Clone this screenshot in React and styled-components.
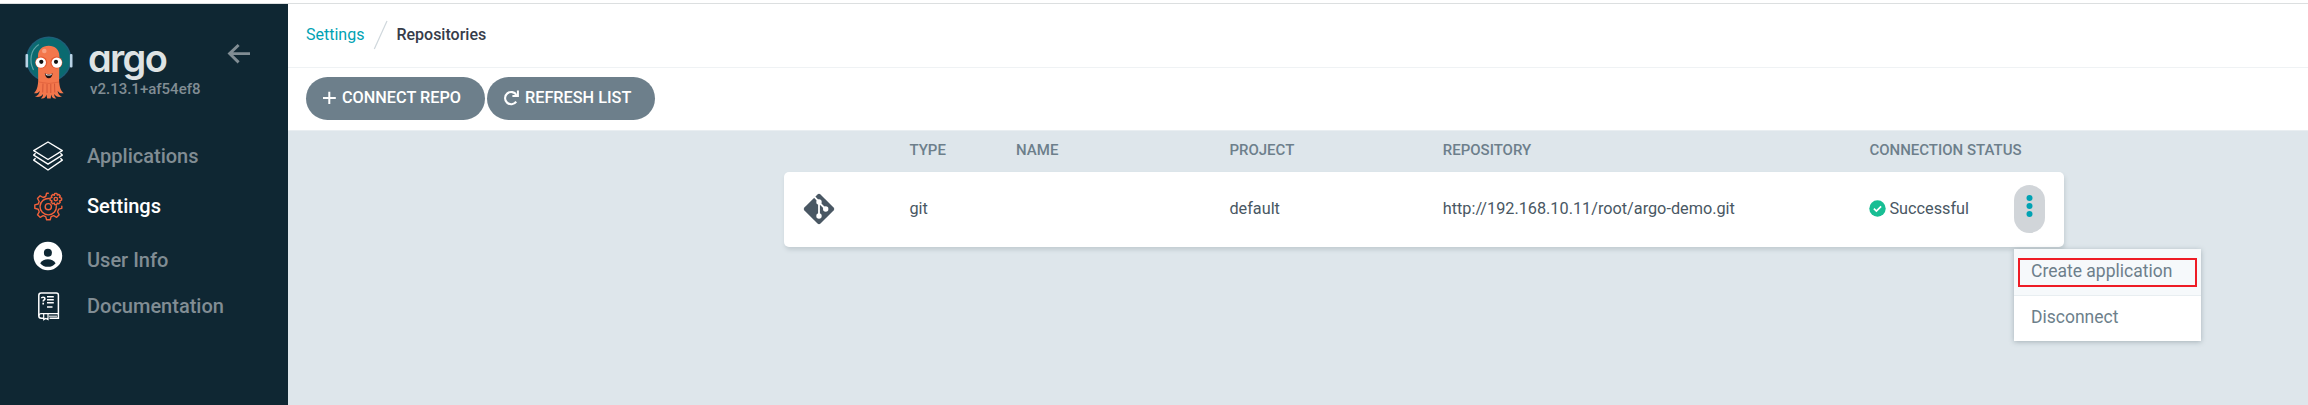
import React from 'react';
import styled, { createGlobalStyle } from 'styled-components';

const GlobalStyle = createGlobalStyle`
  *, *::before, *::after { box-sizing: border-box; }
  body {
    margin: 0;
    background: #fff;
    font-family: Roboto, "Liberation Sans", sans-serif;
    font-size: 16.25px;
    color: #495763;
  }
  svg { display: block; flex: none; }
`;

const Page = styled.div`
  display: flex;
  height: 405px;
  padding-top: 3px;
  position: relative;
  overflow: hidden;
`;

const Sidebar = styled.aside`
  width: 288px;
  flex: none;
  border-top: 1px solid #dcdfe0;
  background: #0f2733;
`;

const Brand = styled.div`
  display: flex;
  height: 127px;
  padding: 32px 0 0 25px;
`;

const BrandText = styled.div`
  width: 138px;
  padding-left: 17px;
  flex: none;
`;

const Wordmark = styled.div`
  height: 44px;
  margin-left: -2px;
  line-height: 44px;
  font-family: Inter, sans-serif;
  font-size: 38px;
  font-weight: 600;
  font-feature-settings: "cv11";
  letter-spacing: -1.7px;
  color: #dee3e4;
`;

const Version = styled.div`
  margin-top: -1px;
  font-size: 15px;
  line-height: 20px;
  font-weight: 500;
  color: #818d94;
`;

const Collapse = styled.div`
  margin: 7px 0 0 16px;
`;

const NavItem = styled.div`
  display: flex;
  align-items: center;
  height: 50px;
  font-size: 20px;
  font-weight: 500;
  color: ${(p) => (p.$active ? '#fff' : '#818d94')};
`;

const NavIcon = styled.span`
  width: 87px;
  padding-left: 32px;
  flex: none;
`;

const NavLabel = styled.span`
  padding-top: ${(p) => p.$drop || 0}px;
`;

const Main = styled.main`
  flex: 1;
  display: flex;
  flex-direction: column;
  border-top: 1px solid #dcdfe0;
`;

const TopBar = styled.header`
  display: flex;
  align-items: center;
  height: 64px;
  padding: 0 0 2px 18px;
  border-bottom: 1px solid #eff2f4;
`;

const Crumb = styled.span`
  line-height: 20px;
  font-size: 16px;
  font-weight: ${(p) => (p.$current ? 500 : 400)};
  color: ${(p) => (p.$current ? '#363c4a' : '#00a2b3')};
`;

const Toolbar = styled.div`
  display: flex;
  gap: 2px;
  height: 63px;
  padding: 9px 0 0 18px;
  border-bottom: 1px solid #e9eef1;
`;

const Button = styled.button`
  display: flex;
  align-items: center;
  gap: 6px;
  width: ${(p) => p.$width}px;
  height: 43px;
  padding: 0 0 2px 16px;
  border: 0;
  border-radius: 22px;
  background: #6d7f8b;
  color: #fff;
  font: 500 16.25px Roboto, sans-serif;
`;

const Content = styled.section`
  flex: 1;
  padding-left: 496px;
  background: #dee6eb;
`;

const Columns = styled.div`
  display: grid;
  grid-template-columns: 1fr 1fr 2fr 2fr 4fr 2fr;
  width: 1280px;
  align-items: center;
`;

const TableHead = styled(Columns)`
  height: 41px;
  padding-bottom: 3px;
  font-size: 15px;
  font-weight: 500;
  color: #6d7f8b;
`;

const TableRow = styled(Columns)`
  height: 75px;
  padding-bottom: 2px;
  border-radius: 5px;
  background: #fff;
  box-shadow: 1px 3px 4px #c3cdd2;
`;

const Cell = styled.div`
  display: flex;
  align-items: center;
  gap: 3px;
  padding-left: 18.75px;
  white-space: nowrap;
`;

const Kebab = styled.span`
  display: grid;
  place-items: center;
  width: 31px;
  height: 48px;
  margin: 0 19px 0 auto;
  padding-bottom: 5px;
  border-radius: 16px;
  background: #d1d5d9;
`;

const Menu = styled.div`
  position: absolute;
  left: 2014px;
  top: 249px;
  width: 187px;
  height: 92px;
  background: #fff;
  box-shadow: 0 1px 5px rgba(60, 80, 90, 0.35);
  font-size: 17.5px;
  color: #6d7f8b;
`;

const MenuItem = styled.div`
  display: flex;
  align-items: center;
  height: ${(p) => (p.$hover ? 47 : 45)}px;
  padding: ${(p) => (p.$hover ? '0 0 2px 17px' : '0 0 3px 17px')};
  background: ${(p) => (p.$hover ? '#f6f9fb' : '#fff')};
  border-bottom: ${(p) => (p.$hover ? '1px solid #e8eef1' : '0')};
`;

const Highlight = styled.div`
  position: absolute;
  left: 4px;
  top: 9px;
  width: 179px;
  height: 29px;
  border: 2px solid #ee1c25;
`;

const Mascot = () => (
  <svg width="48" height="64" viewBox="0 0 48 64">
    <circle cx="23.7" cy="23.2" r="22.7" fill="#1d5f79" />
    <circle cx="23.7" cy="23.2" r="21.2" fill="#0a6a70" />
    <rect x=".5" y="18" width="2.6" height="13.5" rx="1" fill="#b8d2e5" />
    <rect x="44.9" y="18" width="2.6" height="13.5" rx="1" fill="#b8d2e5" />
    <path d="M8.3 33.5C4 25 5.5 14 13.5 8.8" fill="none" stroke="#5fa3a6" strokeWidth="1.2" strokeLinecap="round" />
    <path
      d="M13 20C13 13.5 17.5 9.7 23.7 9.7S34.4 13.5 34.4 20L34.1 45C34.6 50.5 35.3 54.3 38.7 57.2 35.8 57.7 33.6 56.6 32.6 54.7 32.8 57.6 34.5 59.6 37 60.6 33.5 61.8 30.8 60.6 29.3 58 29 60 30 61.5 31.3 62.4 28.5 63.2 26.8 61.5 26.2 58.6L25.7 62.6H22.2L21.4 58.6C20.8 61.5 18.8 63.2 15.8 62.4 17.4 61.2 18.1 59.8 18 58 16.5 60.6 13.4 61.8 10 60.6 12.8 59.6 14.4 57.6 14.7 54.7 13.6 56.6 12 57.7 9 57.2 12 54.3 12.8 50.5 13.2 45Z"
      fill="#f3774c"
    />
    <path d="M18 47.5l-.3 9M22 48v9M25.8 48v9M29.5 47.5l.3 9" stroke="#cf5436" strokeWidth=".9" fill="none" />
    <path d="M14 46Q24 49 34 46" stroke="#e4653f" strokeWidth="1" fill="none" />
    <circle cx="19.3" cy="15" r="2.3" fill="#f9a181" />
    <circle cx="16.2" cy="26.6" r="6" fill="#e4572e" />
    <circle cx="31.4" cy="26.6" r="6" fill="#e4572e" />
    <circle cx="15.8" cy="26.6" r="5.2" fill="#fff" />
    <circle cx="31.8" cy="26.6" r="5.2" fill="#fff" />
    <circle cx="16.3" cy="25.8" r="2.1" fill="#111" />
    <circle cx="31" cy="25.8" r="2.1" fill="#111" />
    <path d="M19.8 37.2Q23.7 40 27.6 37.2 27 42.3 23.7 42.3T19.8 37.2Z" fill="#1b1212" />
    <path d="M20.6 37.8Q23.7 39.6 26.8 37.8L26.5 39Q23.7 40.2 20.9 39Z" fill="#fff" />
  </svg>
);

const BackArrow = () => (
  <svg width="24" height="22" viewBox="0 0 24 22" fill="none" stroke="#818d94" strokeWidth="2.9">
    <path d="M23 10.6H3M11.6 2 2.6 10.6l9 8.8" />
  </svg>
);

const LayersIcon = () => (
  <svg width="32" height="32" viewBox="0 0 32 32" fill="none" stroke="#fff" strokeWidth="1.4" strokeLinejoin="round">
    <path d="M16 2 30.3 10.7 16 19.5 1.7 10.7Z" />
    <path d="M3.6 13.2 1.7 15.1 16 24.2 30.3 15.1 28.4 13.2" />
    <path d="M3.6 18.2 1.7 20.1 16 30 30.3 20.1 28.4 18.2" />
  </svg>
);

const GearsIcon = () => (
  <svg width="32" height="32" viewBox="0 0 32 32" fill="none" stroke="#f1613c" strokeWidth="1.4" strokeLinejoin="round" strokeLinecap="round">
    <path d="M16.3 3.2H14.6L13.7 6.5 11.2 7.5 8.1 5.8 5.5 8.5 7.2 11.5 6.2 14 2.8 14.9V18.3L6.2 19.2 7.2 21.8 5.5 24.8 8.1 27.3 11.2 25.6 13.7 26.6 14.6 29.8H18.2L19.1 26.6 21.6 25.6 24.7 27.3 27.2 24.8 25.6 21.8 26.6 19.2 29.8 18.3V16.2" />
    <path d="M17.2 8.5A8.2 8.2 0 1 0 24.4 16" />
    <circle cx="16.3" cy="16.7" r="3.1" />
    <path d="M22.4 5.3 22.7 3.4H24.9L25.3 5.1 26.9 4.5 28.3 6 27.4 7.4 29.6 8.2V10.1L27.5 10.9 28.3 12.3 26.8 13.8 25.3 13 24.7 14.8H22.8L22.2 13 20.7 13.8 19.2 12.3 20 10.9 18.1 10.1V8.2L20 7.4 19.3 6 20.7 4.5Z" />
    <circle cx="23.8" cy="9.1" r="1.7" />
  </svg>
);

const UserIcon = () => (
  <svg width="32" height="32" viewBox="0 0 32 32">
    <circle cx="15.9" cy="16" r="14.3" fill="#fff" />
    <circle cx="15.9" cy="12.8" r="4" fill="#0f2733" />
    <path d="M8.2 23.2C9.8 20.6 12.6 19.3 15.9 19.3S22 20.6 23.6 23.2C21.8 25.7 19.1 26.8 15.9 26.8S10 25.7 8.2 23.2Z" fill="#0f2733" />
  </svg>
);

const DocsIcon = () => (
  <svg width="32" height="32" viewBox="0 0 32 32" fill="none" stroke="#fff" strokeWidth="1.5">
    <path d="M11.5 28.2H9.2C7.5 28.2 6.8 27 6.8 25.7V5.5C6.8 4 7.6 3 9.2 3H24.3C25.6 3 26.4 3.8 26.4 5V28.2H17.5" />
    <path d="M6.9 25.8C7 24.2 8 23.7 9.2 23.7H26.4" strokeWidth="1.3" />
    <path d="M17 26.2H25" strokeWidth="1" />
    <path d="M15 6.8H21.8M15 9.7H21.8M15 12.7H21.8M15 17H20.5" strokeWidth="1.4" />
    <path d="M9.5 8.2C9.6 7 12.9 6.8 12.9 8.7 12.9 10 11.2 9.9 11.2 11.5M11.2 12.8V14.6" strokeWidth="1.6" />
    <path d="M11.7 24V29.6L13.8 28.4 16 29.6V24" strokeWidth="1.2" />
  </svg>
);

const SlashIcon = () => (
  <svg width="32" height="30" viewBox="0 0 32 30">
    <path d="M10.3 29 23 1" stroke="#cfd7dc" strokeWidth="1.2" />
  </svg>
);

const PlusIcon = () => (
  <svg width="14" height="14" viewBox="0 0 14 14">
    <path d="M7.3 .8V13M1 7H13.8" stroke="#fff" strokeWidth="2" />
  </svg>
);

const RefreshIcon = () => (
  <svg width="16" height="16" viewBox="0 0 16 16">
    <path d="M13.2 11.6A6.1 6.1 0 1 1 13.4 5" fill="none" stroke="#fff" strokeWidth="2.1" />
    <path d="M14.9 .6V6.1H9.4" fill="none" stroke="#fff" strokeWidth="2" />
  </svg>
);

const GitIcon = () => (
  <svg width="32" height="32" viewBox="0 0 32 32">
    <path d="M14.5 1.4Q16 0 17.5 1.4L30.6 14.5Q32 16 30.6 17.5L17.5 30.6Q16 32 14.5 30.6L1.4 17.5Q0 16 1.4 14.5Z" fill="#495763" />
    <path d="M11.4 3.8 16 8.6V23M16 9.5 22.6 16" fill="none" stroke="#fff" strokeWidth="1.8" />
    <circle cx="16" cy="9" r="2.7" fill="#fff" />
    <circle cx="16" cy="23" r="2.7" fill="#fff" />
    <circle cx="22.7" cy="16" r="2.7" fill="#fff" />
  </svg>
);

const CheckIcon = () => (
  <svg width="17" height="17" viewBox="0 0 17 17">
    <circle cx="8.5" cy="8.5" r="8.2" fill="#18be94" />
    <path d="M4.9 8.7 7.4 11.1 12.1 6.3" fill="none" stroke="#fff" strokeWidth="1.7" />
  </svg>
);

const DotsIcon = () => (
  <svg width="7" height="22" viewBox="0 0 7 22" fill="#00a2b3">
    <circle cx="3.5" cy="3.1" r="3" />
    <circle cx="3.5" cy="11" r="3" />
    <circle cx="3.5" cy="18.9" r="3" />
  </svg>
);

const nav = [
  { label: 'Applications', Icon: LayersIcon },
  { label: 'Settings', Icon: GearsIcon, active: true },
  { label: 'User Info', Icon: UserIcon, drop: 7 },
  { label: 'Documentation', Icon: DocsIcon },
];

export default function App() {
  return (
    <>
      <GlobalStyle />
      <Page>
        <Sidebar>
          <Brand>
            <Mascot />
            <BrandText>
              <Wordmark>argo</Wordmark>
              <Version>v2.13.1+af54ef8</Version>
            </BrandText>
            <Collapse><BackArrow /></Collapse>
          </Brand>
          <nav>
            {nav.map(({ label, Icon, active, drop }) => (
              <NavItem key={label} $active={active}>
                <NavIcon><Icon /></NavIcon>
                <NavLabel $drop={drop}>{label}</NavLabel>
              </NavItem>
            ))}
          </nav>
        </Sidebar>
        <Main>
          <TopBar>
            <Crumb>Settings</Crumb>
            <SlashIcon />
            <Crumb $current>Repositories</Crumb>
          </TopBar>
          <Toolbar>
            <Button $width={179}><PlusIcon />CONNECT REPO</Button>
            <Button $width={168}><RefreshIcon />REFRESH LIST</Button>
          </Toolbar>
          <Content>
            <TableHead>
              <Cell />
              <Cell>TYPE</Cell>
              <Cell>NAME</Cell>
              <Cell>PROJECT</Cell>
              <Cell>REPOSITORY</Cell>
              <Cell>CONNECTION STATUS</Cell>
            </TableHead>
            <TableRow>
              <Cell><GitIcon /></Cell>
              <Cell>git</Cell>
              <Cell />
              <Cell>default</Cell>
              <Cell>http://192.168.10.11/root/argo-demo.git</Cell>
              <Cell><CheckIcon />Successful<Kebab><DotsIcon /></Kebab></Cell>
            </TableRow>
          </Content>
        </Main>
        <Menu>
          <MenuItem $hover>Create application</MenuItem>
          <MenuItem>Disconnect</MenuItem>
          <Highlight />
        </Menu>
      </Page>
    </>
  );
}
